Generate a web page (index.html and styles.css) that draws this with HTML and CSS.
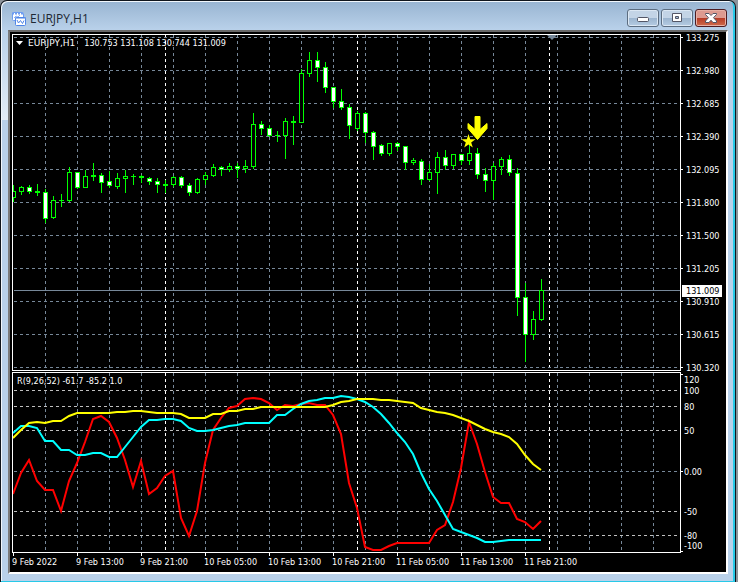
FILE: index.html
```html
<!DOCTYPE html>
<html lang="en">

<head>
    <meta charset="UTF-8">
    <title>EURJPY,H1</title>
    <link rel="stylesheet" href="styles.css">
</head>

<body>
    <div class="window">
        <header class="titlebar">
            <svg class="app-icon" width="16" height="16" viewBox="0 0 16 16">
                <rect x="1.5" y="1.5" width="11" height="8" rx="1" fill="#fff" stroke="#6d9cf0" />
                <path d="M1 2.5h12" stroke="#6d9cf0" stroke-width="2" stroke-dasharray="2 1" />
                <path d="M3 7l2-2 2 1 2-2" fill="none" stroke="#8fb2f2" />
                <rect x="4.5" y="6.5" width="10" height="8" rx="1" fill="#fff" stroke="#4f86e8" />
                <path d="M4 7h11" stroke="#4f86e8" />
                <path d="M6 9l1.500 3 2-2.500 2 3 1.500-3" fill="none" stroke="#4f86e8" />
            </svg>
            <h1>EURJPY,H1</h1>
            <div class="controls">
                <button type="button" aria-label="Minimize">
                    <svg width="12" height="12" viewBox="0 0 12 12">
                        <rect x="0.500" y="5.500" width="11" height="4" rx="1" fill="#fff" stroke="#535666" />
                    </svg>
                </button>
                <button type="button" aria-label="Maximize">
                    <svg width="12" height="12" viewBox="0 0 12 12">
                        <path d="M1.500 1.500h9v8h-9z" fill="#fff" stroke="#535666" stroke-linejoin="round" />
                        <path d="M4.500 4.500h3v2h-3z" fill="#9fb9d4" stroke="#535666" />
                    </svg>
                </button>
                <button type="button" class="close" aria-label="Close">
                    <svg width="14" height="12" viewBox="0 0 14 12">
                        <path d="M1.500 1.500h3.500l2 2 2-2h3.500v1L9.500 5.700l3 3.300v1.500H9L7 8.200 5 10.500H1.500V9l3-3.300-3-3.200z" fill="#fff"
                            stroke="#535666" stroke-linejoin="round" />
                    </svg>
                </button>
            </div>
        </header>

        <main class="client">
            <section class="pane">
                <svg class="plot price" id="price"></svg>
                <svg class="axis price" id="price-axis"></svg>
                <p class="legend symbol">
                    <svg width="7" height="4" viewBox="0 0 7 4">
                        <path d="M0 0h7L3.500 4z" fill="#fff" />
                    </svg>
                    <span class="name">EURJPY,H1</span>
                    <span>130.753 131.108 130.744 131.009</span>
                </p>
            </section>
            <section class="pane">
                <svg class="plot range" id="range"></svg>
                <svg class="axis range" id="range-axis"></svg>
                <p class="legend">R(9,26,52) -61.7 -85.2 1.0</p>
            </section>
            <ol class="times">
                <li>9 Feb 2022</li>
                <li>9 Feb 13:00</li>
                <li>9 Feb 21:00</li>
                <li>10 Feb 05:00</li>
                <li>10 Feb 13:00</li>
                <li>10 Feb 21:00</li>
                <li>11 Feb 05:00</li>
                <li>11 Feb 13:00</li>
                <li>11 Feb 21:00</li>
            </ol>
        </main>
    </div>
    <script src="chart.js"></script>
</body>

</html>
```

FILE: styles.css
```css
* {
    box-sizing: border-box;
}

body {
    margin: 0;
    background: #8d949c;
    font-family: "DejaVu Sans Condensed", "DejaVu Sans", sans-serif;
}

.window {
    min-height: 100vh;
    margin-right: 2px;
    padding: 0 7px 7px;
    border: 1px solid #10151c;
    border-bottom: 0;
    border-radius: 7px 7px 0 0;
    background:
        linear-gradient(#b9d1ea, #e3ecf6) 0 29px / 7px 90px no-repeat,
        linear-gradient(#98b4d1, #b9d1ea 29px);
    box-shadow: inset -2px -1px 0 #27c9e8, inset 1px 1px 0 #f2f7fc;
}

.titlebar {
    display: flex;
    align-items: center;
    height: 29px;
    padding: 0 1px 0 3px;
}

.app-icon {
    margin-top: 6px;
}

h1 {
    flex: 1;
    margin: 6px 0 0 3px;
    color: #1e2833;
    font: 12px/16px "Open Sans", sans-serif;
}

.controls {
    display: flex;
    gap: 2px;
    margin-top: 5px;
}

.controls button {
    display: flex;
    align-items: center;
    justify-content: center;
    width: 32px;
    height: 18px;
    padding: 0;
    border: 1px solid #5c6d80;
    border-radius: 3px;
    background: linear-gradient(#c3d4e6 50%, #9bb4ce 50%, #b5cce3);
    box-shadow: inset 0 0 0 1px #dbe7f3;
}

.controls .close {
    border-color: #4d1c22;
    background: linear-gradient(#dd9a90 50%, #b63a25 50%, #cf6c4c);
    box-shadow: inset 0 0 0 1px #e7b0a5;
}

.client {
    padding: 2px 0 0 2px;
    border: 2px solid #fff;
    border-top-color: #696969;
    border-left-color: #7b7b7b;
    background: #000;
    color: #fff;
    font-size: 9px;
}

.pane {
    position: relative;
    display: flex;
    margin-bottom: 1px;
}

.plot {
    flex: 1;
    min-width: 0;
    border: 1px solid #fff;
}

.axis {
    width: 45px;
    overflow: visible;
    fill: #fff;
}

.price {
    height: 337px;
}

.range {
    height: 181px;
}

/* legends lie over the plot */
.legend {
    position: absolute;
    top: 3px;
    left: 5px;
    margin: 0;
    line-height: 12px;
}

.symbol {
    display: flex;
    align-items: center;
    gap: 5px;
    left: 4px;
}

.name {
    padding-right: 4px;
    font-family: "DejaVu Sans", sans-serif;
}

.times {
    display: flex;
    height: 19px;
    margin: -1px 0 0;
    padding: 0;
    overflow: hidden;
    list-style: none;
    line-height: 14px;
    white-space: nowrap;
}

.times li {
    flex: 0 0 64px;
    padding-top: 2px;
    background: linear-gradient(#fff, #fff) 1px 0 / 1px 3px no-repeat;
}

.grid {
    stroke: #778899;
    stroke-dasharray: 3 3;
}

.level {
    stroke: #c0c0c0;
    stroke-dasharray: 3 3;
}

.day {
    stroke: #fff;
    stroke-dasharray: 3 3;
}

.bid {
    stroke: #778899;
}

.wick,
.body {
    stroke: #00ff00;
}

.body {
    fill: #000;
}

.body.down {
    fill: #fff;
}

.signal {
    fill: #ffff00;
}

.arrow {
    stroke: #ffff00;
}

.shift {
    fill: #778899;
}

.series {
    fill: none;
    stroke-width: 2;
}

.fast {
    stroke: #ff0000;
}

.middle {
    stroke: #00ffff;
}

.slow {
    stroke: #ffff00;
}

.tick {
    stroke: #fff;
}

.bid-box {
    fill: #fff;
}

.bid-text {
    fill: #000;
}
```

FILE: chart.js
```js
const NS = 'http://www.w3.org/2000/svg';
const STEP = 8;
const MAX_X = 2400;

const prices = [
    '133.275', '132.980', '132.685', '132.390', '132.095', '131.800',
    '131.500', '131.205', '130.910', '130.615', '130.320'
];

// high, open, close, low as distances down the price scale
const candles = [
    [151, 163, 157, 167], [152, 157, 153, 160], [151, 153, 157, 159], [150, 157, 158, 161],
    [155, 158, 184, 188], [162, 183, 166, 184], [160, 166, 166, 172], [133, 166, 138, 167],
    [138, 138, 153, 154], [136, 153, 142, 153], [129, 141, 142, 146], [139, 141, 148, 158],
    [137, 147, 151, 153], [139, 152, 144, 154], [136, 144, 142, 158], [140, 142, 142, 150],
    [141, 142, 143, 148], [143, 144, 147, 150], [144, 147, 150, 158], [146, 150, 151, 158],
    [142, 150, 143, 152], [142, 143, 151, 153], [149, 151, 158, 161], [144, 158, 145, 159],
    [138, 145, 141, 150], [130, 141, 133, 142], [132, 133, 135, 141], [129, 135, 132, 137],
    [129, 132, 134, 143], [126, 134, 132, 138], [79, 132, 90, 134], [87, 90, 94, 100],
    [91, 94, 101, 102], [97, 101, 101, 107], [84, 101, 87, 124], [82, 87, 88, 110],
    [35, 88, 39, 88], [18, 39, 26, 42], [18, 26, 33, 47], [28, 33, 53, 58],
    [53, 53, 67, 73], [55, 67, 73, 75], [70, 73, 91, 104], [77, 94, 79, 96],
    [78, 79, 98, 108], [97, 98, 112, 125], [110, 111, 119, 121], [109, 119, 109, 121],
    [108, 109, 112, 116], [112, 112, 128, 135], [124, 128, 126, 130], [125, 127, 145, 150],
    [130, 145, 138, 146], [118, 138, 123, 159], [116, 123, 131, 135], [120, 131, 120, 134],
    [120, 120, 126, 130], [111, 126, 119, 130], [114, 119, 140, 144], [134, 140, 146, 157],
    [129, 146, 132, 165], [123, 132, 125, 140], [121, 125, 138, 141], [134, 139, 263, 281],
    [249, 263, 300, 327], [277, 300, 285, 305], [245, 285, 256, 286]
];

const fast = [
    121, 100, 87, 108, 117, 117, 138, 108, 90, 69, 46, 43, 49, 65, 87, 114, 88, 121, 115, 103, 98, 145,
    163, 138, 90, 57, 45, 35, 33, 26, 25, 26, 30, 37, 32, 33, 31, 30, 32, 32, 42, 61, 110, 135, 174, 177,
    177, 173, 170, 170, 170, 170, 170, 157, 152, 129, 95, 49, 71, 99, 124, 130, 130, 146, 149, 156, 148
];
const middle = [
    60, 53, 53, 55, 68, 68, 77, 77, 82, 82, 80, 80, 84, 84, 74, 64, 54, 47, 47, 46, 46, 48,
    55, 58, 58, 57, 55, 53, 52, 50, 50, 50, 50, 42, 42, 36, 31, 28, 27, 25, 25, 23, 24, 26, 29, 34,
    41, 50, 60, 69, 81, 100, 116, 128, 142, 156, 159, 162, 165, 169, 169, 168, 167, 167, 167, 167, 167
];
const slow = [
    65, 57, 50, 49, 50, 48, 48, 43, 40, 40, 40, 40, 40, 39, 39, 38, 38, 39, 40, 40, 40, 41,
    45, 45, 45, 41, 41, 38, 38, 36, 36, 34, 34, 34, 34, 34, 34, 34, 34, 34, 32, 29, 28, 26, 26, 26,
    27, 27, 28, 29, 30, 35, 37, 39, 40, 42, 45, 48, 52, 56, 59, 61, 64, 71, 82, 91, 97
];

function add(parent, tag, attrs, text) {
    const el = document.createElementNS(NS, tag);
    for (const name in attrs) {
        el.setAttribute(name, attrs[name]);
    }
    if (text !== undefined) {
        el.textContent = text;
    }
    parent.appendChild(el);
    return el;
}

function hline(svg, y, cls) {
    add(svg, 'line', { x1: 1, x2: '100%', y1: y + 0.5, y2: y + 0.5, class: cls });
}

function vline(svg, x, cls) {
    add(svg, 'line', { x1: x + 0.5, x2: x + 0.5, y1: 0, y2: '100%', class: cls });
}

function columns(svg) {
    for (let x = 32; x < MAX_X; x += 32) {
        vline(svg, x, 'grid');
    }
    [152, 344, 536].forEach(x => vline(svg, x, 'day'));
}

function label(svg, x, y, text) {
    add(svg, 'text', { x: x, y: y + 4 }, text);
}

function tick(svg, y) {
    add(svg, 'line', { x1: 0, x2: 2, y1: y + 0.5, y2: y + 0.5, class: 'tick' });
}

function drawPrice() {
    const svg = document.getElementById('price');
    const axis = document.getElementById('price-axis');

    columns(svg);
    prices.forEach((price, i) => {
        const y = 2 + i * 33;
        hline(svg, y, 'grid');
        tick(axis, y + 1);
        label(axis, 5, y + 1, price);
    });
    hline(svg, 255, 'bid');
    add(svg, 'path', { d: 'M534 0h10l-5 5z', class: 'shift' });

    candles.forEach(([high, open, close, low], i) => {
        const x = i * STEP;
        const top = Math.min(open, close) - 1;
        const height = Math.abs(open - close);
        add(svg, 'line', { x1: x + 0.5, x2: x + 0.5, y1: high - 1, y2: low, class: 'wick' });
        add(svg, 'rect', {
            x: x - 1.5, y: top + 0.5, width: 4, height: height,
            class: close > open ? 'body down' : 'body'
        });
        // rects without height are not painted
        if (height === 0) {
            add(svg, 'line', { x1: x - 2, x2: x + 3, y1: top + 0.5, y2: top + 0.5, class: 'wick' });
        }
    });

    add(svg, 'path', { d: 'M462 81.500h5v13l7-6v5l-9.500 11-9.500-11v-5l7 6z', class: 'signal arrow' });
    add(svg, 'path', { d: 'M455.500 99l1.700 5.200h5.300l-4.300 3.200 1.600 5.100-4.300-3.100-4.300 3.100 1.600-5.100-4.300-3.200h5.300z', class: 'signal' });

    add(axis, 'rect', { x: 1, y: 251, width: 40, height: 12, class: 'bid-box' });
    add(axis, 'text', { x: 5, y: 260, class: 'bid-text' }, '131.009');
}

function drawSeries(svg, values, cls) {
    const points = values.map((y, i) => (i * STEP) + ',' + y).join(' ');
    add(svg, 'polyline', { points: points, class: 'series ' + cls });
}

function drawRange() {
    const svg = document.getElementById('range');
    const axis = document.getElementById('range-axis');

    columns(svg);
    [17, 33, 57, 138, 162].forEach(y => hline(svg, y, 'level'));
    hline(svg, 98, 'grid');
    drawSeries(svg, fast, 'fast');
    drawSeries(svg, middle, 'middle');
    drawSeries(svg, slow, 'slow');

    [2, 99, 179].forEach(y => tick(axis, y));
    const labels = [[7, '120'], [18, '100'], [34, '80'], [58, '50'], [99, '0.00'], [139, '-50'], [163, '-80'], [173, '-100']];
    labels.forEach(([y, text]) => label(axis, 3, y, text));
}

drawPrice();
drawRange();
```
